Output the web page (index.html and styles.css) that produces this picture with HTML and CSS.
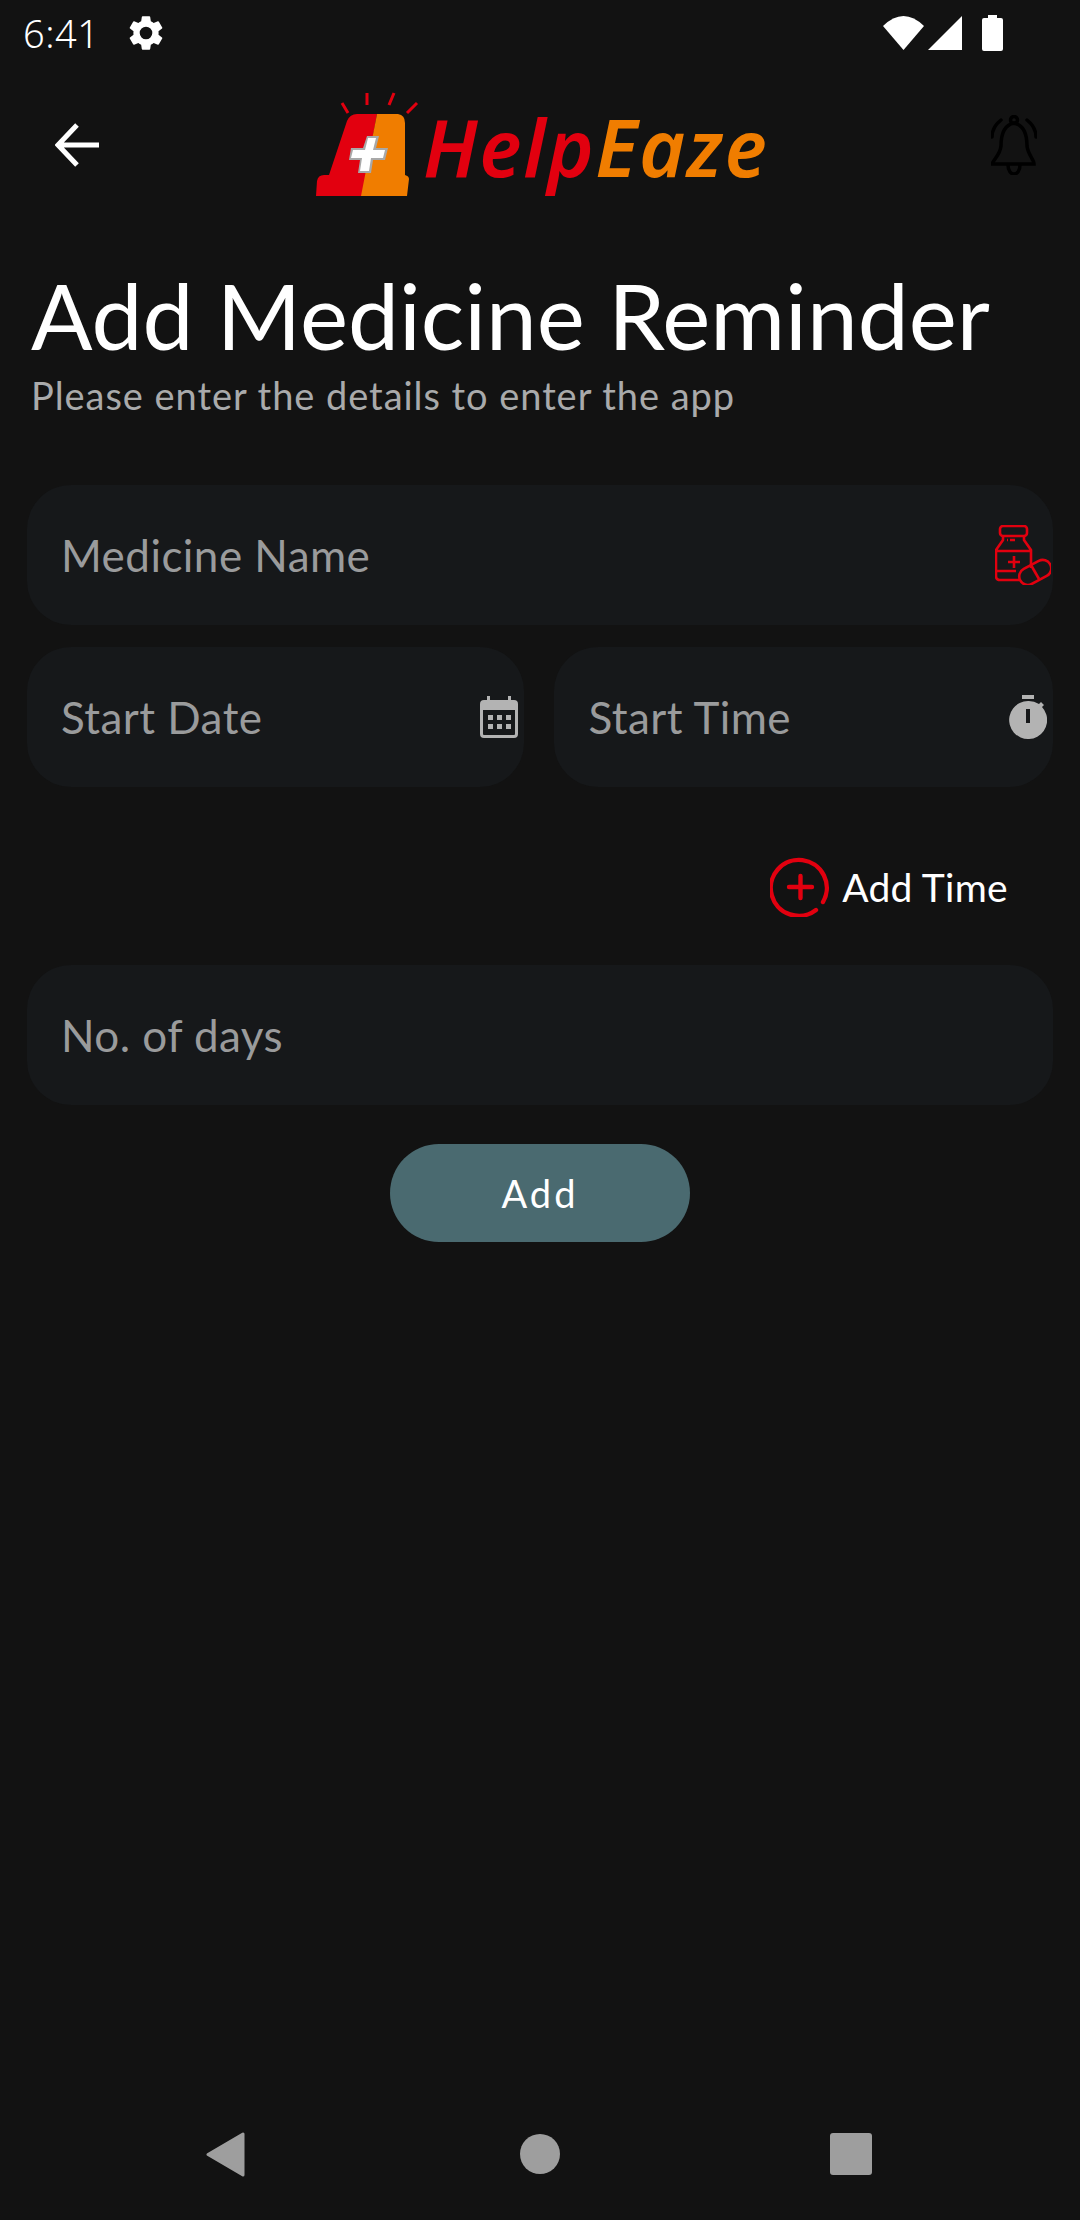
FILE: index.html
```html
<!DOCTYPE html>
<html lang="en">

<head>
    <meta charset="UTF-8">
    <meta name="viewport" content="width=device-width, initial-scale=1.0">
    <title>Add Medicine Reminder</title>
    <link rel="stylesheet" href="styles.css">
</head>
<body>
    <div class="screen">
        <!-- Status bar -->
        <div class="status-bar">
            <span class="clock">6:41</span>
            <svg class="gear" width="42" height="42" viewBox="0 0 24 24"><path fill="#fff" d="M19.14 12.94c.04-.3.06-.61.06-.94s-.02-.64-.07-.94l2.03-1.58a.49.49 0 0 0 .12-.61l-1.92-3.32a.49.49 0 0 0-.59-.22l-2.39.96c-.5-.38-1.03-.7-1.62-.94l-.36-2.54a.48.48 0 0 0-.48-.41h-3.84a.48.48 0 0 0-.47.41l-.36 2.54c-.59.24-1.13.57-1.62.94l-2.39-.96a.48.48 0 0 0-.59.22L2.74 8.87a.47.47 0 0 0 .12.61l2.03 1.58c-.05.3-.09.63-.09.94s.02.64.07.94l-2.03 1.58a.49.49 0 0 0-.12.61l1.92 3.32c.12.22.37.29.59.22l2.39-.96c.5.38 1.03.7 1.62.94l.36 2.54c.05.24.24.41.48.41h3.84c.24 0 .44-.17.47-.41l.36-2.54c.59-.24 1.13-.56 1.62-.94l2.39.96c.22.08.47 0 .59-.22l1.92-3.32a.47.47 0 0 0-.12-.61l-2.01-1.58zM12 15.6A3.6 3.6 0 1 1 12 8.4a3.6 3.6 0 0 1 0 7.2z"/></svg>
            <div class="status-right">
                <svg width="41" height="34" viewBox="0 0 41 34"><path fill="#fff" d="M0 10Q20.5-10 41 10L20.5 34z"/></svg>
                <svg class="signal" width="34" height="34" viewBox="0 0 34 34"><path fill="#fff" d="M34 0V34H0z"/></svg>
                <svg class="battery" width="21" height="36" viewBox="0 0 21 36"><path fill="#fff" d="M6 0h9v3h4a2 2 0 0 1 2 2v29a2 2 0 0 1-2 2H2a2 2 0 0 1-2-2V5a2 2 0 0 1 2-2h4z"/></svg>
            </div>
        </div>

        <!-- Header with back, logo, bell -->
        <div class="top-bar">
            <svg class="back" width="44" height="44" viewBox="0 0 44 44"><path fill="none" stroke="#fff" stroke-width="5" d="M44 22H4M22 2L3 22l19 20"/></svg>
            <div class="logo">
                <svg width="93" height="104" viewBox="316 93 93 104">
                    <path fill="#e2000f" d="M316 196l1-15q1-6 7-6h5l18-54q3-7 10-7h20l-15 82z"/>
                    <path fill="#f07d00" d="M377 114h21q7 1 7 9v52q4 1 4 4l-2 17h-46z"/>
                    <path fill="#a8a8a8" d="M367 136h12l-3 12h12l-3 12h-12l-2 13h-13l2-13h-11l2-12h12z"/>
                    <path fill="#fff" d="M368 138h8l-3 12h12l-2 8h-12l-2 13h-9l2-13h-11l2-8h12z"/>
                    <path fill="none" stroke="#e2000f" stroke-width="3" d="M342 103l6 10M367 93v12M394 93l-5 12M417 103l-10 10"/>
                </svg>
                <span class="logo-text"><span class="logo-red">Help</span><span class="logo-orange">Eaze</span></span>
            </div>
            <svg class="bell" width="46" height="60" viewBox="0 0 46 60"><g fill="none" stroke="#000" stroke-width="3.5" stroke-linecap="round"><path d="M3 49h40c0-5-6-9-7-18 0-11-3-21-13-23C13 10 10 20 10 31 9 40 3 44 1 49z"/><circle cx="23" cy="5" r="3.5"/><path d="M17 50c0 12 12 12 12 0M1 22C1 15 5 9 10 5M45 22c0-7-4-13-9-17"/></g></svg>
        </div>

        <h1 class="title">Add Medicine Reminder</h1>
        <p class="subtitle">Please enter the details to enter the app</p>

        <form class="form">
            <div class="field">
                <span class="placeholder">Medicine Name</span>
                <svg class="icon-med" width="56" height="60" viewBox="995 526 56 60">
                    <g fill="none" stroke="#e2000f" stroke-width="2.6" stroke-linejoin="round">
                        <rect x="1000" y="527" width="27" height="10" rx="3"/>
                        <path d="M1003 537v4l-7 10v26q0 4 4 4h19M1024 537v4l7 10v18M996 552h35M996 572h20"/>
                        <path d="M1007 541h1M1010 541h5M1008 563h12M1014 557v12"/>
                        <rect x="1018" y="565" width="34" height="17" rx="8.5" transform="rotate(-28 1035 573)"/>
                        <path d="M1031 566l8 14"/>
                    </g>
                </svg>
            </div>

            <div class="field-row">
                <div class="field">
                    <span class="placeholder">Start Date</span>
                    <svg class="icon-date" width="38" height="42" viewBox="0 0 38 42">
                        <path fill="#b3b3b3" fill-rule="evenodd" d="M7 0h3v4h18V0h3v4h3a4 4 0 0 1 4 4v30a4 4 0 0 1-4 4H4a4 4 0 0 1-4-4V8a4 4 0 0 1 4-4h3zM3 14v24a1 1 0 0 0 1 1h30a1 1 0 0 0 1-1V14z"/>
                        <path fill="#b3b3b3" d="M8 19h5v5H8zM17 19h5v5h-5zM26 19h5v5h-5zM8 28h5v5H8zM17 28h5v5h-5zM26 28h5v5h-5z"/>
                    </svg>
                </div>
                <div class="field">
                    <span class="placeholder">Start Time</span>
                    <svg class="icon-timer" width="38" height="44" viewBox="0 0 38 44">
                        <path fill="#b3b3b3" d="M13 0h12v4H13z"/>
                        <path fill="#b3b3b3" fill-rule="evenodd" d="M19 6a19 19 0 0 1 11 3l2-2 3 3-2 2a19 19 0 1 1-14-6zM17 14v14h4V14z"/>
                    </svg>
                </div>
            </div>

            <div class="add-time">
                <svg width="61" height="60" viewBox="0 0 61 60"><g fill="none" stroke="#e2000f" stroke-width="4.4" stroke-linecap="round"><path d="M46 53A28 28 0 1 1 53 45"/><path d="M30.500 19V41M19 30H42"/></g></svg>
                <span>Add Time</span>
            </div>

            <div class="field">
                <span class="placeholder">No. of days</span>
            </div>

            <button type="button" class="add-btn">Add</button>
        </form>

        <!-- Android nav bar -->
        <div class="nav-bar">
            <svg width="39" height="45" viewBox="0 0 39 45"><path fill="#9e9e9e" stroke="#9e9e9e" stroke-width="3" stroke-linejoin="round" d="M37 2V43L2 22.500z"/></svg>
            <span class="nav-home"></span>
            <span class="nav-recent"></span>
        </div>
    </div>
</body>
</html>
```

FILE: styles.css
```css
* {
    box-sizing: border-box;
}

body {
    margin: 0;
    background-color: #121212;
    font-family: 'Lato', sans-serif;
    color: #fff;
}

.screen {
    width: 1080px;
    height: 2220px;
    display: flex;
    flex-direction: column;
}

/* Status bar */
.status-bar {
    height: 66px;
    display: flex;
    align-items: center;
    padding: 0 77px 0 23px;
}

.clock {
    font-family: 'Noto Sans', sans-serif;
    font-size: 38px;
    font-weight: 300;
    letter-spacing: 0.5px;
    width: 102px;
}

.status-right {
    margin-left: auto;
    display: flex;
    align-items: center;
}

.signal {
    margin-left: 4px;
}

.battery {
    margin-left: 20px;
}

/* Top bar */
.top-bar {
    height: 158px;
    display: flex;
    align-items: center;
    padding: 0 43px 0 55px;
}

.logo {
    margin-left: 217px;
    display: flex;
    align-items: flex-start;
}

.logo svg {
    overflow: visible;
}

.logo-text {
    margin-left: 14px;
    margin-top: 4px;
    font-family: 'Noto Sans', sans-serif;
    font-size: 79px;
    line-height: 100px;
    font-weight: 600;
    font-style: italic;
    letter-spacing: 1.6px;
}

.logo-red {
    color: #e2000f;
}

.logo-orange {
    color: #f07d00;
}

.bell {
    margin-left: auto;
}

/* Title */
.title {
    margin: 41px 0 0 31px;
    font-size: 91px;
    line-height: 100px;
    font-weight: 400;
}

.subtitle {
    margin: 6px 0 0 31px;
    font-size: 38px;
    line-height: 48px;
    letter-spacing: 0.95px;
    color: #a9aaab;
}

/* Form */
.form {
    margin-top: 66px;
    padding: 0 27px;
    display: flex;
    flex-direction: column;
    gap: 22px;
}

.field {
    height: 140px;
    flex: 1;
    flex-basis: auto;
    padding: 0 0 0 34px;
    display: flex;
    align-items: center;
    justify-content: space-between;
    background-color: #16181a;
    border-radius: 44px;
}

.field-row {
    display: flex;
    gap: 30px;
}

.placeholder {
    font-size: 44px;
    letter-spacing: 0.45px;
    color: #9a9b9c;
}

.icon-med {
    margin-right: 2px;
}

.icon-date {
    margin-right: 6px;
}

.icon-timer {
    margin-right: 6px;
}

.add-time {
    height: 178px;
    margin: -22px 0;
    padding: 22px 45px 0 0;
    display: flex;
    align-items: center;
    justify-content: flex-end;
    gap: 11px;
    font-size: 39px;
    letter-spacing: 0.3px;
}

.add-btn {
    align-self: center;
    width: 300px;
    height: 98px;
    margin-top: 17px;
    border: none;
    border-radius: 49px;
    background-color: #4a6a70;
    color: #fff;
    font-family: 'Lato', sans-serif;
    font-size: 38px;
    letter-spacing: 3px;
}

/* Nav bar */
.nav-bar {
    margin-top: auto;
    height: 132px;
    display: flex;
    align-items: center;
    padding: 0 0 0 206px;
}

.nav-home {
    width: 40px;
    height: 40px;
    margin-left: 275px;
    border-radius: 50%;
    background-color: #9e9e9e;
}

.nav-recent {
    width: 42px;
    height: 42px;
    margin-left: 270px;
    border-radius: 3px;
    background-color: #9e9e9e;
}
```
